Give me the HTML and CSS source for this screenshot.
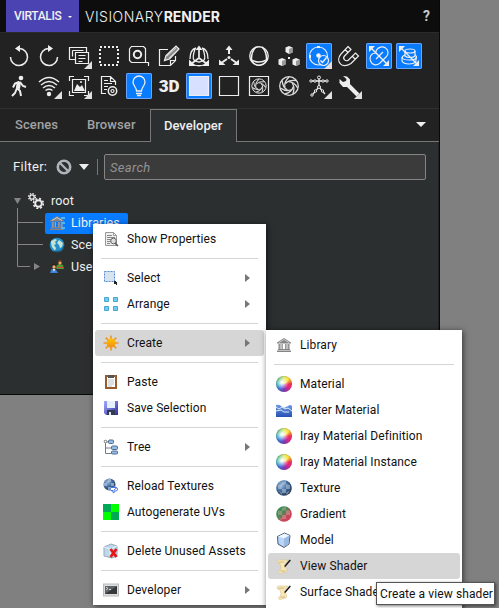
FILE: index.html
```html
<!DOCTYPE html>
<html lang="en">
<head>
<meta charset="utf-8">
<title>Visionary Render</title>
<link rel="stylesheet" href="styles.css">
</head>
<body>
<svg class="defs" width="0" height="0">
  <defs>
    <linearGradient id="gold" x1="0" y1="0" x2="0" y2="1"><stop offset="0" stop-color="#ffc400"/><stop offset="1" stop-color="#f09010"/></linearGradient>
    <linearGradient id="floppy" x1="0" y1="0" x2="1" y2="1"><stop offset="0" stop-color="#a6adff"/><stop offset="1" stop-color="#2c2ba0"/></linearGradient>
    <radialGradient id="ball" cx=".35" cy=".3" r=".75"><stop offset="0" stop-color="#9dbce0"/><stop offset=".5" stop-color="#416c9f"/><stop offset="1" stop-color="#26384f"/></radialGradient>
    <linearGradient id="sea" x1="0" y1="0" x2="0" y2="1"><stop offset="0" stop-color="#6f9ce3"/><stop offset="1" stop-color="#264fb5"/></linearGradient>
    <linearGradient id="redgreen" x1="0" y1="0" x2="1" y2="1"><stop offset="0" stop-color="#329b58"/><stop offset=".42" stop-color="#4d8557"/><stop offset=".62" stop-color="#c6495b"/><stop offset="1" stop-color="#d53e55"/></linearGradient>
    <symbol id="temple" viewBox="0 0 16 16"><path d="M1 5.500 8 1l7 4.500v1H1zM2.500 7h2v5h-2zM5.500 7h1.500v5H5.500zM9 7h1.500v5H9zM11.500 7h2v5h-2zM2 12h12v1H2zM1 13.500h14V15H1z" fill="#858585"/><path d="m3 5.500 5-3 5 3" stroke="#ccc" fill="none"/><path d="M4 7v5M6.500 7v5M10 7v5M13 7v5" stroke="#b8b8b8" stroke-width=".6"/></symbol>
    <symbol id="scroll" viewBox="0 0 16 16"><path d="M1 3.500C1 1.500 4 2 12 2L9 6c0 2 1 4 2 6l-1 2-6 1.500C2 15.500 2 13 4 12.500L5 10 4 5.500C2 6 1 5 1 3.500z" fill="#f6e6b8" stroke="#d5bf85" stroke-width=".5"/><path d="M2.500 4.500C4 3.500 6 4.500 8 4M4.500 13H9" stroke="#c7ae70" stroke-width=".8" fill="none"/><path d="m14.300 2-5.500 6.500" stroke="#181818" stroke-width="1.500"/><path d="m8 9.500.4-1.700 1.200 1z" fill="#aa7b35"/></symbol>
    <symbol id="corner" viewBox="0 0 26 26"><path d="M26 18v8h-8z" fill="#e0e0e0"/></symbol>
    <symbol id="shutter" viewBox="0 0 26 26">
      <circle cx="13" cy="13" r="9.300"/>
      <path id="blade" d="M9.500 10.500Q13 6.500 20 7.500"/>
      <use href="#blade" transform="rotate(51.430 13 13)"/><use href="#blade" transform="rotate(102.860 13 13)"/><use href="#blade" transform="rotate(154.290 13 13)"/><use href="#blade" transform="rotate(205.710 13 13)"/><use href="#blade" transform="rotate(257.140 13 13)"/><use href="#blade" transform="rotate(308.570 13 13)"/>
    </symbol>
  </defs>
</svg>

<main class="panel">
  <header class="header">
    <div class="brand"><span>VIRTALIS</span><i></i></div>
    <div class="title"><span>VISIONARY</span><b>RENDER</b></div>
    <div class="help">?</div>
  </header>

  <section class="toolbar">
    <div class="tool"><svg viewBox="0 0 26 26"><path d="M13.500 5.500A8.500 8.500 0 1 1 4.500 14" stroke-width="1.500"/><path d="m9 5.500 5-3.500v7z" class="solid"/></svg></div>
    <div class="tool"><svg viewBox="0 0 26 26"><path d="M12.500 5.500A8.500 8.500 0 1 0 21.500 14" stroke-width="1.500"/><path d="m17 5.500-5-3.500v7z" class="solid"/></svg></div>
    <div class="tool"><svg viewBox="0 0 26 26"><path d="M9.500 16.500h-6v-12h17v5M9.500 9.500h13v11h-13zM12.500 12.500h7M12.500 15.500h7M12.500 18.500h4M6.500 7.500h11M6.500 7.500v6"/><use href="#corner"/></svg></div>
    <div class="tool"><svg viewBox="0 0 26 26"><path d="M4 4h18v18H4z" stroke-width="2" stroke-dasharray="2 2"/></svg></div>
    <div class="tool"><svg viewBox="0 0 26 26"><path d="M22.500 23v-3.500h-17l-2-2V6l2-2.500h12l2 2v14"/><circle cx="11.500" cy="11.500" r="3.700" stroke-width="2"/></svg></div>
    <div class="tool"><svg viewBox="0 0 26 26"><path d="M12 6.500H3.500v16h11l5-5V13M14.500 22v-4.500h5"/><path d="m8.500 17.500 1.500-5 10-9.500 3 3-9.500 10z" fill="#888"/><path d="m11 13 9-8M13 15l9-8" stroke-width=".7"/></svg></div>
    <div class="tool"><svg viewBox="0 0 26 26"><path d="M13 5v10l-8 6M13 15l8 6" stroke-width="1.700"/><path d="m9.500 7 3.500-4.500L16.500 7zM3 16.500V23h7zM23 16.500V23h-7z" class="solid"/><path d="M10 5C6 6 4 10 4 16M16 5c4 1 6 5 6 11M8 22q5 1.500 10 0M9 6Q6 15 8 17q5 4 10 0 2-2-1-11" stroke-width="1.300"/></svg></div>
    <div class="tool"><svg viewBox="0 0 26 26"><path d="M13 6v5M11 16l-5 3.500M15 16l5 3.500" stroke-width="2"/><path d="m9.500 7 3.500-4.500L16.500 7zM3 16.500V22h6.500zM23 16.500V22h-6.500z" class="solid"/><circle cx="13" cy="14.500" r="1.500" class="solid"/></svg></div>
    <div class="tool"><svg viewBox="0 0 26 26"><circle cx="13" cy="13" r="9.200" stroke-width="1.400"/><path d="M10 4Q5 9 5.500 17q7.500 4 15 0Q21 9 16 4" stroke-width="1.500"/><path d="M5.500 17q2 5 7.500 5.500 5.500-.5 7.500-5.500"/></svg></div>
    <div class="tool"><svg viewBox="0 0 26 26"><g class="cubes"><path d="m13 3 3.500 1.500v5L13 11 9.500 9V4.500zM6 15l3.500 1.500v5L6 23l-3.500-1.500v-5zM20 15l3.500 1.500v5L20 23l-3.500-1.500v-5z"/></g><path d="M13 6v5l3.500-1.500v-5zM6 18v5l3.500-1.500v-5zM20 18v5l3.500-1.500v-5z" fill="#999" stroke="none"/><path d="M12 14h2v2h-2z" class="solid"/></svg></div>
    <div class="tool on"><svg viewBox="0 0 26 26"><circle cx="12.500" cy="13" r="9"/><circle cx="12.500" cy="12.500" r="1.700" fill="#fff"/><path d="M11 3h3v2h-3zM3 12h2v3H3z" class="solid"/><circle cx="17.500" cy="17.500" r="5" fill="#087bff"/><path d="m14.500 17.500 2 2 4-5" stroke-width="1.500"/><use href="#corner"/></svg></div>
    <div class="tool"><svg viewBox="0 0 26 26"><path d="m12 3.500 3 3-6.500 6.500c-2.500 3 1.500 6 4 4l7-7 3 3-7.500 7.500C5.500 26.500-1 18 5 11zM9 6.500l3 3M16.500 13.500l3 3"/></svg></div>
    <div class="tool on"><svg viewBox="0 0 26 26"><path d="m5 5 16 16" stroke-width="1.400"/><path d="M10 10C5 10 3 14 4.500 18S10 23 13.500 20.500L20 14c3-3 2.500-7-.5-9s-7-1-9 2l-1 3M10 16l7-7"/><path d="M3 3h6L3 9zM23 23h-6l6-6z" class="solid"/></svg></div>
    <div class="tool on"><svg viewBox="0 0 26 26"><path d="m5 5 16 16"/><path d="M9 8v5c2 2 8 2 10 0V8M6 14v4c2 4 12 4 14 0v-4"/><ellipse cx="14" cy="8" rx="5" ry="2"/><path d="M9 12c-5 2-3 5 4 5 8 0 9-3 6-5"/><path d="M3 3h6L3 9zM23 23h-6l6-6z" class="solid"/></svg></div>

    <div class="tool rowstart"><svg viewBox="0 0 26 26"><circle cx="15" cy="5" r="2.300" class="solid"/><path d="m13 9-4 1.500-2 4M12 9l-1 6 3 3 1 5M11 15l-2 5-3 3M14 9l3 4 3 1" stroke-width="2"/><path d="m12 8 3 1-1 7-4-1z" class="solid"/></svg></div>
    <div class="tool"><svg viewBox="0 0 26 26"><path d="M3 9q10-9 20 0M5 12q8-7 16 0M7 15q6-5 12 0M9.500 17.500q3.500-2.500 7 0" stroke-width="1.500"/><circle cx="13" cy="21" r="2.200" class="solid"/><use href="#corner"/></svg></div>
    <div class="tool"><svg viewBox="0 0 26 26"><path d="M8 3.500H3.500V8M18 3.500h4.500V8M8 22.500H3.500V18M18 22.500h4.500V18M6.500 6.500h13v13h-13z"/><path d="m8 18 3-7 3 3 2-2 3 6z" class="solid"/><circle cx="15" cy="9" r="1" class="solid"/><use href="#corner"/></svg></div>
    <div class="tool"><svg viewBox="0 0 26 26"><path d="M10 20.500H5.500v-17h9l5 5V12M14.500 3.500v5h5M8 7.500h4M8 10.500h8M8 13.500h4M8 16.500h3"/><circle cx="16.500" cy="18" r="4.200" stroke-width="1.500"/><circle cx="16.500" cy="18" r="1.500"/></svg></div>
    <div class="tool on"><svg viewBox="0 0 26 26"><path d="M10.500 18c0-4-3.500-5-3.500-9a6 6 0 0 1 12 0c0 4-3.500 5-3.500 9zM10 20.500h6M11 22.500h4" stroke-width="1.300"/></svg></div>
    <div class="tool three">3D</div>
    <div class="tool on"><svg viewBox="0 0 26 26"><path d="M3.500 3.500h19v19h-19z" fill="#d8e0ff"/></svg></div>
    <div class="tool"><svg viewBox="0 0 26 26"><path d="M3.500 3.500h19v19h-19z"/></svg></div>
    <div class="tool"><svg viewBox="0 0 26 26"><path d="M3.500 3.500h19v19h-19z"/><use class="iris" href="#shutter" x="3" y="3" width="20" height="20"/></svg></div>
    <div class="tool"><svg viewBox="0 0 26 26"><use class="iris" href="#shutter" width="26" height="26"/></svg></div>
    <div class="tool"><svg viewBox="0 0 26 26"><path d="M5 8h16M13 5v9l-6 7M13 14l6 7" stroke-width="1.300"/><g class="joints"><circle cx="13" cy="4.500" r="1.500"/><circle cx="5" cy="8" r="1.200"/><circle cx="9" cy="8" r="1.200"/><circle cx="17" cy="8" r="1.200"/><circle cx="21" cy="8" r="1.200"/><circle cx="13" cy="14" r="1.500"/><circle cx="9.500" cy="18" r="1.200"/><circle cx="16.500" cy="18" r="1.200"/><circle cx="6" cy="22" r="1.200"/></g><use href="#corner"/></svg></div>
    <div class="tool"><svg viewBox="0 0 26 26"><path d="m11 11 11 11" stroke-width="4"/><path d="m7 3 4 .5 3 3V11l-3 3H7L3.500 10V6L7 9l3-1 .5-2z" class="solid"/><use href="#corner"/></svg></div>
  </section>

  <nav class="tabs">
    <div class="tab scenes">Scenes</div>
    <div class="tab browser">Browser</div>
    <div class="tab active">Developer</div>
    <i class="caret"></i>
  </nav>

  <section class="content">
    <div class="filter">
      <span class="filter-label">Filter:</span>
      <svg class="ban" viewBox="0 0 16 16"><circle cx="8" cy="8" r="6.200" fill="none" stroke="#b0b4b8" stroke-width="2.600"/><path d="m4 4 8 8" stroke="#b0b4b8" stroke-width="2.300"/></svg>
      <i class="caret"></i>
      <i class="divider"></i>
      <div class="search">Search</div>
    </div>
    <div class="tree">
      <div class="node"><span class="branch"><svg viewBox="0 0 28 22"><path d="M14 8h7l-3.500 6z" fill="#858585"/><path d="M17.500 18v4" class="line"/></svg></span>
        <svg class="icon root-icon" viewBox="0 0 16 16"><g stroke="#eee" fill="none"><circle cx="4" cy="4" r="2.200" stroke-width="1.300"/><circle cx="4" cy="4" r="3.400" stroke-width="1.300" stroke-dasharray="1.400 1.270"/><circle cx="10.500" cy="10.500" r="3.300" stroke-width="1.900"/><circle cx="10.500" cy="10.500" r="4.900" stroke-width="1.600" stroke-dasharray="2 1.850"/></g></svg><span>root</span></div>
      <div class="node child"><span class="branch"><svg viewBox="0 0 45 22"><path d="M17.500 0v22M17.500 10.500H43" class="line"/></svg></span>
        <div class="selected"><svg class="icon" viewBox="0 0 16 16"><use href="#temple"/><path d="M12 2h4v2h-4zM13 7h3v2h-3zM12 12h4v2h-4z" fill="#52b5ef"/></svg><span>Libraries</span></div></div>
      <div class="node child"><span class="branch"><svg viewBox="0 0 45 22"><path d="M17.500 0v22M17.500 10.500H43" class="line"/></svg></span>
        <svg class="icon" viewBox="0 0 16 16"><circle cx="8" cy="8" r="7.300" fill="#2490cb"/><path d="m2 4 4-2 2 1-2 2 1 2-2 1 2 3-1 3-3-4-1-4zM10 3l4 3-1 4-2 1-1-3-2-2z" fill="#c5e2d2"/><path d="M5 14q8 2 10-5" stroke="#174c70" fill="none"/></svg><span>Scenes</span></div>
      <div class="node child"><span class="branch"><svg viewBox="0 0 45 22"><path d="M17.500 0v10.500H30" class="line"/><path d="m34 7 6 3.500-6 3.500z" fill="#858585"/></svg></span>
        <svg class="icon" viewBox="0 0 16 16"><path d="M7 9V7l3-2 4 1 1 4H8z" fill="#4c9e32"/><circle cx="11" cy="3" r="2.300" fill="#653a21"/><circle cx="11" cy="4" r="1.500" fill="#e4ad6c"/><path d="m1 14 1.500-4h4L9 14z" fill="#3d83d5"/><circle cx="5" cy="7" r="2.500" fill="#30231b"/><circle cx="5" cy="8" r="1.700" fill="#e6b174"/><path d="M9 8.500h5" stroke="#e33"/><path d="m4 10 1 3 1-3" fill="#fff"/></svg><span>Users</span></div>
    </div>
  </section>
</main>

<div class="menu main-menu">
  <div class="item"><svg class="icon" viewBox="0 0 16 16"><path d="M2.500 1.500h8l3 3v10h-11zM10.500 1.500v3h3" fill="#eee" stroke="#999"/><path d="M4 4.500h5M4 6.500h8M4 8.500h6M4 10.500h4M4 12.500h3" stroke="#888"/><circle cx="10.500" cy="10" r="2.800" fill="#ddd" stroke="#666"/><path d="m12 12 3 3" stroke="#555" stroke-width="1.500"/></svg><span>Show Properties</span></div>
  <hr>
  <div class="item"><svg class="icon" viewBox="0 0 16 16"><path d="M1.500 1.500h10v10h-10z" fill="#d7e4f0" stroke="#5489d5" stroke-dasharray="2 1"/><path d="M11 11h2v1h1v3h-1v-1h-2z" fill="#222"/></svg><span>Select</span><i class="more"></i></div>
  <div class="item"><svg class="icon" viewBox="0 0 16 16"><path d="M1.500 1.500h4v4h-4zM10.500 1.500h4v4h-4zM1.500 10.500h4v4h-4zM10.500 10.500h4v4h-4z" fill="#70cdf2" stroke="#48a7d0"/></svg><span>Arrange</span><i class="more"></i></div>
  <hr>
  <div class="item hover"><svg class="icon" viewBox="0 0 16 16"><path d="M8 .5v15M.5 8h15M2.700 2.700l10.600 10.600M13.300 2.700 2.700 13.300" stroke="#ee982b" stroke-width="1.700"/><circle cx="8" cy="8" r="4.500" fill="url(#gold)"/></svg><span>Create</span><i class="more"></i></div>
  <hr>
  <div class="item"><svg class="icon" viewBox="0 0 16 16"><path d="M3 2h10v12H3z" fill="#fff" stroke="#9a5b2c" stroke-width="2"/><path d="M5 1h6v3H5z" fill="#555"/><path d="M5 6h6M5 8h6M5 10h6M5 12h4" stroke="#b7c0c7"/></svg><span>Paste</span></div>
  <div class="item"><svg class="icon" viewBox="0 0 16 16"><path d="M1 1h14v14H3l-2-2z" fill="url(#floppy)"/><path d="M4 1h8v7H4z" fill="#e6f0fb"/><path d="M4 10h8v5H4z" fill="#333b50"/><path d="M6 12h2v3H6z" fill="#dfe5ef"/></svg><span>Save Selection</span></div>
  <hr>
  <div class="item"><svg class="icon" viewBox="0 0 16 16"><path d="M2.500 4v10.500H9M2.500 9H9M2.500 3H7" stroke="#747e8a" fill="none"/><g fill="#93bce4" stroke="#526f91"><rect x="5.500" y="1" width="5" height="3.500" rx="1"/><rect x="8.500" y="7" width="6" height="3.500" rx="1"/><rect x="8.500" y="12" width="6" height="3" rx="1"/></g><circle cx="2.500" cy="2.500" r="1.300" fill="#fff" stroke="#777"/></svg><span>Tree</span><i class="more"></i></div>
  <hr>
  <div class="item"><svg class="icon" viewBox="0 0 16 16"><circle cx="6.500" cy="6.500" r="6" fill="url(#ball)"/><path d="M5 1h3v3H5zM1 5h3v3H1zM8 5h3v3H8zM5 9h3v3H5z" fill="#b8cadc" opacity=".65"/><path d="M10.500 12.500H8q-2-1.500 0-3h3V8l2.500 2-2.500 2M11 9.500h2.500q2.500 1.500 0 3.500H11v2L8.500 13" fill="#fff" stroke="#4978e8"/></svg><span>Reload Textures</span></div>
  <div class="item"><svg class="icon" viewBox="0 0 16 16"><path d="M0 0h16v16H0z" fill="#0f0"/><path d="M0 0h8v8H0zM8 8h8v8H8z" fill="#00aa55"/></svg><span>Autogenerate UVs</span></div>
  <hr>
  <div class="item"><svg class="icon" viewBox="0 0 16 16"><path d="m1 4 7-3 6 2v10l-5 2-8-2z" fill="#bdd8ed" stroke="#9aabb8"/><path d="m1 4 6 2 7-3M7 6v8" stroke="#e7f3fb" fill="none"/><path d="m7.500 6 6 8M13.500 6l-6 8" stroke="#e41616" stroke-width="2.800"/></svg><span>Delete Unused Assets</span></div>
  <hr>
  <div class="item"><svg class="icon" viewBox="0 0 16 16"><rect x=".5" y="2" width="15" height="12" fill="#ddd" stroke="#bbb"/><path d="M2 4h12v8H2z" fill="#34383c"/><path d="m2 4h12L2 12z" fill="#60646a"/><path d="m3 5 2 1.500L3 8M6 7.500h2" stroke="#eee" stroke-width=".8" fill="none"/></svg><span>Developer</span><i class="more"></i></div>
</div>

<div class="menu submenu">
  <div class="item"><svg class="icon"><use href="#temple"/></svg><span>Library</span></div>
  <hr>
  <div class="item"><i class="icon wheel"></i><span>Material</span></div>
  <div class="item"><svg class="icon" viewBox="0 0 16 16"><path d="M0 3q3-1 5 1l3 2 4-2q2-2 4 0v11H0z" fill="url(#sea)"/><path d="m0 5 3 2 3-2 3 2 3-1 4 3M0 9l5-1 3 2 5 0" stroke="#dceafa" fill="none"/></svg><span>Water Material</span></div>
  <div class="item"><i class="icon wheel"></i><span>Iray Material Definition</span></div>
  <div class="item"><i class="icon wheel"></i><span>Iray Material Instance</span></div>
  <div class="item"><svg class="icon" viewBox="0 0 16 16"><circle cx="8" cy="8" r="7.800" fill="url(#ball)"/><path d="m6 2 4-1v3L6 5zM2 5h4v4H2zM10 4l4 1v4h-4zM6 9h4v4H6zM2 10l4 3v2zM10 13l4-3-3 5z" fill="#c3d0dd" opacity=".5"/></svg><span>Texture</span></div>
  <div class="item"><svg class="icon" viewBox="0 0 16 16"><circle cx="8" cy="8" r="7.800" fill="url(#redgreen)"/><path d="m6 2 4-1v3L6 5zM2 5h4v4H2zM10 4l4 1v4h-4zM6 9h4v4H6zM2 10l4 3v2z" fill="#d7b6a7" opacity=".4"/></svg><span>Gradient</span></div>
  <div class="item"><svg class="icon" viewBox="0 0 16 16"><path d="m1.500 4.500 7-3.500L14 3.500l-1 8.500-5 3.500L2 12z" fill="#b8d6fa" stroke="#3b4654" stroke-width=".9"/><path d="m2 4.500 6 2 5.500-3L8.500 1.500z" fill="#eef6ff"/><path d="m8 6.500 5.500-3-1 8.500L8 15z" fill="#9dbbe2"/></svg><span>Model</span></div>
  <div class="item hover"><svg class="icon"><use href="#scroll"/></svg><span>View Shader</span></div>
  <div class="item"><svg class="icon"><use href="#scroll"/></svg><span>Surface Shader</span></div>
</div>
<div class="tooltip">Create a view shader</div>
</body>
</html>
```
FILE: styles.css
```css
* { box-sizing: border-box; }
html, body { margin: 0; width: 499px; height: 608px; overflow: hidden; }
body { position: relative; background: #808080; color: #f0f0f0; font: 12px/16px Roboto, sans-serif; letter-spacing: .1px; }
.defs { position: absolute; }
svg { display: block; }
.panel { width: 440px; height: 395px; background: #222; border-right: 1px solid #080808; border-bottom: 1px solid #080808; overflow: hidden; }
.header { height: 33px; display: flex; padding-left: 6px; background: #0d0d0d; border-bottom: 1px solid #2b2b2b; }
.brand { width: 73px; height: 32px; padding-left: 8px; display: flex; align-items: center; background: #4c43b3; font: 500 12px/32px Roboto, sans-serif; letter-spacing: -.35px; }
.brand span { width: 48px; }
.brand i { margin: 2px 0 0 6px; border: solid transparent; border-width: 2.500px 2.500px 0; border-top-color: #fff; }
.title { width: 140px; margin-left: 6px; font: 300 14px/33px Inter, sans-serif; letter-spacing: .5px; white-space: nowrap; }
.title b { font-weight: 700; letter-spacing: 0; }
.help { margin-left: auto; padding-right: 9px; color: #c8c8c8; font: 700 14px/33px Roboto, sans-serif; }
.toolbar { height: 75px; padding: 8px 0 0 4px; display: grid; grid-template-columns: repeat(14, 30px); grid-template-rows: 30px 30px; }
.rowstart { grid-column: 1; }
.tool { width: 26px; height: 26px; margin: 2px; }
.tool svg { width: 26px; height: 26px; fill: none; stroke: #eee; stroke-width: 1.2; }
.tool .solid, .cubes { fill: #eee; stroke: none; }
.tool use { stroke: none; }
.tool use.iris { stroke: #ddd; stroke-width: 1.3; }
.joints { fill: #222; stroke-width: 1; }
.tool.on { background: #087bff; border-radius: 2px; box-shadow: inset 0 0 0 1px #69a4ff; }
.three { font: 900 17px/26px Roboto, sans-serif; letter-spacing: -.3px; text-align: center; }
.tabs { height: 34px; display: flex; border-top: 1px solid #303030; border-bottom: 1px solid #777; color: #a2a2a2; font: 500 13px/32px Roboto, sans-serif; letter-spacing: .1px; }
.tab { padding-left: 15px; }
.scenes { width: 72px; }
.browser { width: 78px; }
.active { width: 87px; height: 33px; padding-left: 13px; border: 1px solid #777; border-bottom: 0; background: #2b2f30; color: #eee; line-height: 31px; letter-spacing: 0; }
.caret { border: solid transparent; border-width: 6px 5px 0; border-top-color: #eee; }
.tabs .caret { margin: 13px 13px 0 auto; border-top-width: 5px; }
.content { height: 253px; margin-right: 1px; background: #2b2f30; padding-top: 12px; }
.filter { height: 26px; padding-left: 13px; display: flex; align-items: center; }
.filter-label { width: 43px; font-size: 13px; letter-spacing: .3px; }
.ban { width: 16px; height: 16px; }
.filter .caret { margin-left: 7px; }
.divider { width: 1px; height: 16px; margin-left: 8px; background: #777; }
.search { width: 322px; height: 26px; margin-left: 6px; padding-left: 5px; border: 1px solid #858585; border-radius: 2px; background: #3c3b3b; color: #929292; font: italic 13px/25px Roboto, sans-serif; letter-spacing: .3px; }
.tree { margin-top: 10px; font-size: 12.500px; }
.node { height: 22px; display: flex; align-items: center; }
.branch { width: 28px; height: 22px; }
.child .branch { width: 45px; }
.branch svg { width: 100%; height: 22px; }
.line { fill: none; stroke: #858585; stroke-width: 1; }
.icon { width: 16px; height: 16px; flex: none; }
.node .icon { margin-left: 4px; }
.node .root-icon { margin-left: 0; }
.node .icon + span { margin-left: 6px; }
.node .root-icon + span { margin-left: 7px; }
.selected { width: 83px; height: 21px; display: flex; align-items: center; border-radius: 2px; background: #087bff; }
.menu { position: absolute; padding: 2px; background: #fff; color: #111; font-size: 12px; box-shadow: 1px 1px 6px #0009; }
.main-menu { left: 93px; top: 224px; width: 173px; height: 381px; }
.submenu { left: 266px; top: 330px; width: 196px; height: 290px; }
.item { height: 26px; padding-left: 8px; display: flex; align-items: center; gap: 8px; border-radius: 3px; white-space: nowrap; }
.hover { background: #d6d6d6; }
.menu hr { height: 1px; margin: 6px; border: 0; background: #d5d5d5; }
.more { margin: 0 14px 0 auto; border: solid transparent; border-width: 4.500px 0 4.500px 5px; border-left-color: #777; }
.wheel { border-radius: 50%; background: radial-gradient(circle at 38% 40%, #fff 5%, #fff9 22%, transparent 50%), conic-gradient(#dfe64b, #ffe025 12%, #ed304f 25%, #de248d 37%, #783ab5 50%, #317de0 66%, #25aebb 76%, #32b64f 88%, #dfe64b); box-shadow: inset 0 0 1px #333; }
.tooltip { position: absolute; left: 376px; top: 582px; width: 119px; height: 23px; padding-left: 3px; border: 1px solid #555; background: #fff; color: #111; font-size: 12px; line-height: 22px; white-space: nowrap; box-shadow: 1px 1px 3px #0008; }
```
